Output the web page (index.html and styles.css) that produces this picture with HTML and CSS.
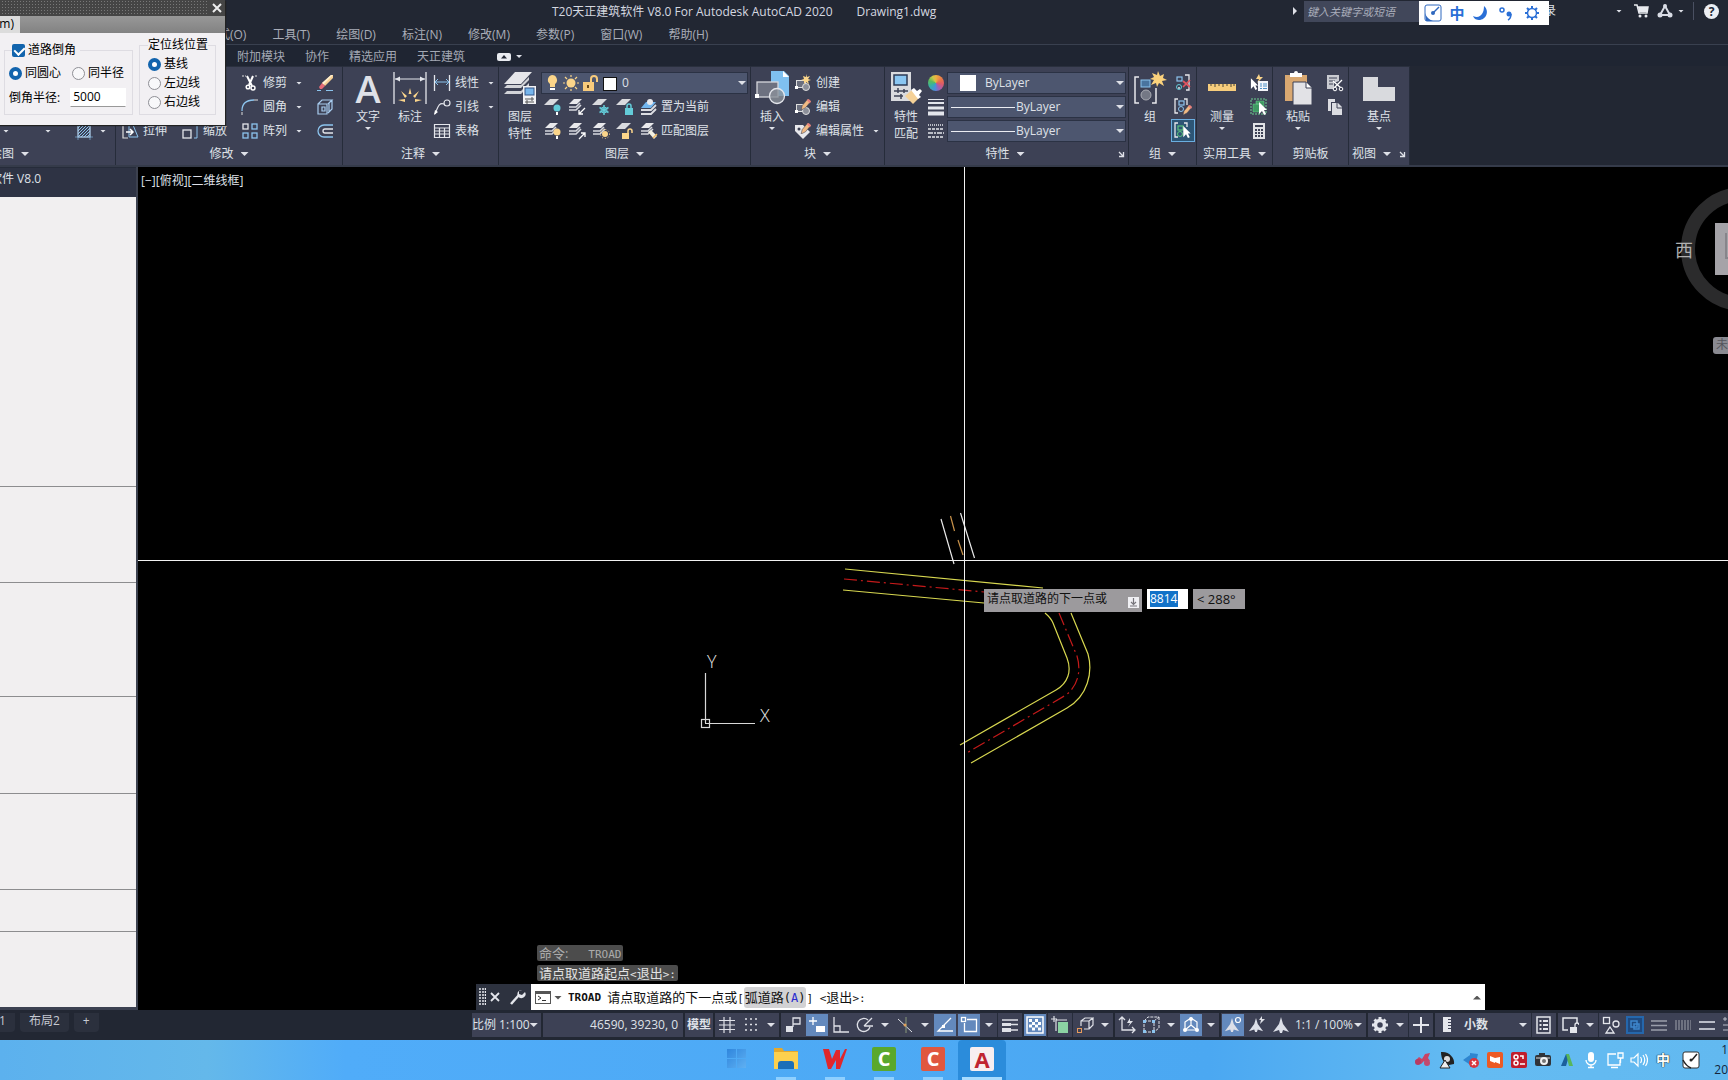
FILE: index.html
```html
<!DOCTYPE html>
<html lang="zh-CN">
<head>
<meta charset="utf-8">
<title>T20天正建筑软件 V8.0 For Autodesk AutoCAD 2020</title>
<link rel="stylesheet" href="styles.css">
</head>
<body>
<svg class="sprite" aria-hidden="true">
  <defs>
    <pattern id="hatch" width="3" height="3" patternUnits="userSpaceOnUse"><path d="M0 3L3 0" stroke="#8cc4ee" stroke-width="1"/></pattern>
    <linearGradient id="winlogo" x1="0" y1="0" x2="1" y2="1"><stop offset="0" stop-color="#2f86dd"/><stop offset="1" stop-color="#5fb0f2"/></linearGradient>
  </defs>
  <symbol id="scissors" viewBox="0 0 18 18"><path d="M1 2h4M14 2h3" stroke="#ddd" stroke-dasharray="2 1"/><path d="M6 2l5 10M12 2L8 11" stroke="#fff" stroke-width="2" fill="none"/><circle cx="7" cy="13" r="1.800" fill="none" stroke="#fff" stroke-width="1.500"/><circle cx="12" cy="14" r="2" fill="none" stroke="#fff" stroke-width="1.500"/></symbol>
  <symbol id="fillet" viewBox="0 0 18 18"><path d="M1 17v-3M13 2h4" stroke="#ddd"/><path d="M1 13C1 6 5 2 13 2" fill="none" stroke="#8cc4ee" stroke-width="1.300"/></symbol>
  <symbol id="array" viewBox="0 0 18 18"><g fill="none" stroke="#8cc4ee" stroke-width="1.300"><rect x="2" y="2" width="5" height="5" stroke="#e4e6ec"/><rect x="11" y="2" width="5" height="5"/><rect x="2" y="11" width="5" height="5"/><rect x="11" y="11" width="5" height="5"/></g></symbol>
  <symbol id="eraser" viewBox="0 0 18 18"><path d="M1 16.500h4M10 16.500h7" stroke="#8cc4ee"/><path d="M6 9l9-8h2v3L9 12z" fill="#f6cf93"/><path d="M15 1h2L7 11 6 9z" fill="#fff0d0"/><path d="M3 13l3-4 3 3-3 3-2 0z" fill="#e56a76"/></symbol>
  <symbol id="explode" viewBox="0 0 18 18"><path d="M2 6h9v10H2zM2 6l4-4h10l-4 4M16 2v9l-4 4M6 9h3v4H6zM13 5v9" fill="none" stroke="#a9cdf0" stroke-width="1.200"/></symbol>
  <symbol id="offset" viewBox="0 0 18 18"><path d="M17 3H8a6 6 0 0 0 0 12h9" fill="none" stroke="#8cc4ee" stroke-width="1.300"/><path d="M17 7H9a2 2 0 0 0 0 4h8" fill="none" stroke="#e4e6ec" stroke-width="1.300"/></symbol>
  <symbol id="stretch" viewBox="0 0 18 18"><path d="M7 3H2v13h5" fill="none" stroke="#ddd" stroke-width="1.200"/><path d="M8 3v12h9L12 3" fill="none" stroke="#8cc4ee"/><path d="M5 10h7m-3-3l3 3-3 3" fill="none" stroke="#fff" stroke-width="1.500"/></symbol>
  <symbol id="scale" viewBox="0 0 18 18"><path d="M2 3h14v13h-3" fill="none" stroke="#8cc4ee"/><rect x="2" y="8" width="8" height="8" fill="none" stroke="#e4e6ec" stroke-width="1.300"/></symbol>
  <symbol id="dimlin" viewBox="0 0 18 18"><path d="M1.500 1v16M16.500 1v16" stroke="#e4e6ec" stroke-width="1.300"/><path d="M2 8h14M5 5L2 8l3 3M13 5l3 3-3 3" fill="none" stroke="#8cc4ee"/></symbol>
  <symbol id="leader" viewBox="0 0 18 18"><circle cx="14" cy="5" r="3" fill="none" stroke="#e4e6ec" stroke-width="1.200"/><path d="M11 6C6 4 5 9 2 16" fill="none" stroke="#e4e6ec" stroke-width="1.200"/><path d="M1 17l1-5 3 2z" fill="#fff"/></symbol>
  <symbol id="table" viewBox="0 0 18 18"><path d="M1.500 2.500h15v13h-15zM1 6h16M1 9h16M1 12h16M6.500 6v10M11.500 6v10" fill="none" stroke="#e4e6ec" stroke-width="1.200"/></symbol>
  <symbol id="sheets" viewBox="0 0 18 18"><path d="M6 1h8l-5 5H1z" fill="#e9e9ec"/><path d="M1 9h7l4-4M1 12h7l5-5" fill="none" stroke="#d6d8de" stroke-width="1.600"/></symbol>
  <symbol id="sheet" viewBox="0 0 18 18"><path d="M6 2h9l-6 6H0z" fill="#d9dade"/></symbol>
  <symbol id="pencil" viewBox="0 0 10 10"><path d="M2 6l5-6 3 2-5 6-4 2z" fill="#f1ba83" stroke="#3d4155" stroke-width=".5"/><path d="M6 1l2-1 2 2-1 2z" fill="#e9807c"/></symbol>
  <symbol id="blk" viewBox="0 0 18 18"><rect x="2.500" y="6.500" width="9" height="7" fill="#6b6f7e" stroke="#ddd"/><circle cx="12" cy="13" r="3.500" fill="#8c8f99" stroke="#ddd"/><rect x="1" y="12" width="3" height="3" fill="#fff"/></symbol>
  <symbol id="cursor" viewBox="0 0 10 14"><path d="M1 0l8 8H6l2 4-2 1-2-4-3 3z" fill="#fff"/></symbol>
  <symbol id="launch" viewBox="0 0 8 8"><path d="M2 2l4 4M6.500 2v4.500H2" fill="none" stroke="#dfe1e8" stroke-width="1.300"/></symbol>
  <symbol id="annot" viewBox="0 0 18 18"><path d="M9 1l2 7 6 8-6-2-1 3h-2l-1-3-6 2 6-8z" fill="#dcdfe8"/></symbol>
</svg>

<header class="titlebar">
  <h1 class="title">T20天正建筑软件 V8.0 For Autodesk AutoCAD 2020<span class="doc">Drawing1.dwg</span></h1>
  <div class="title-tools">
    <i class="rt"></i>
    <input class="search" aria-label="搜索" placeholder="键入关键字或短语">
    <button class="login">登录</button>
    <i class="dn"></i>
    <svg class="i16" viewBox="0 0 16 16"><path d="M1 2h3l2 8h8l1-6H5" fill="none" stroke="#e9ebf0" stroke-width="1.500"/><path d="M5 4h10l-1 5H6z" fill="#e9ebf0"/><circle cx="7" cy="13" r="1.500" fill="#e9ebf0"/><circle cx="13" cy="13" r="1.500" fill="#e9ebf0"/></svg>
    <svg class="i16" viewBox="0 0 16 16"><path d="M8 3l5 9H3z" fill="none" stroke="#d9dce5" stroke-width="2"/><circle cx="8" cy="3" r="2" fill="#d9dce5"/><circle cx="3" cy="12" r="2.500" fill="#d9dce5"/><circle cx="13" cy="12" r="2.500" fill="#d9dce5"/></svg>
    <i class="dn"></i>
    <span class="vbar"></span>
    <span class="help">?</span>
  </div>
  <div class="ime">
    <svg class="i18" viewBox="0 0 18 18"><rect x="1" y="1" width="16" height="16" rx="2" fill="#fff" stroke="#2f68bf"/><path d="M15 3l-6 6" stroke="#2f68bf" stroke-width="1.500"/><circle cx="9" cy="9" r="2" fill="#2f68bf"/><path d="M1 9q2 6 8 8H2z" fill="#2f68bf"/></svg>
    <b>中</b>
    <svg class="i18" viewBox="0 0 18 18"><path d="M12 2c6 5 2 14-5 14-2 0-5-1-6-4 7 3 11-2 11-10z" fill="#2a6fd6"/></svg>
    <svg class="i18" viewBox="0 0 18 18"><circle cx="5" cy="6" r="2" fill="none" stroke="#2a6fd6" stroke-width="1.500"/><circle cx="12" cy="10" r="2.500" fill="#2a6fd6"/><path d="M14 10c0 3-1 5-3 6" fill="none" stroke="#2a6fd6" stroke-width="1.500"/></svg>
    <svg class="i18" viewBox="0 0 18 18"><circle cx="9" cy="9" r="4.500" fill="none" stroke="#2a6fd6" stroke-width="1.500"/><path d="M9 2v3M9 13v3M2 9h3M13 9h3M4 4l2 2M12 12l2 2M14 4l-2 2M6 12l-2 2" stroke="#2a6fd6" stroke-width="2"/></svg>
  </div>
</header>

<nav class="menubar">
  <a href="#">格式(O)</a><a href="#">工具(T)</a><a href="#">绘图(D)</a><a href="#">标注(N)</a><a href="#">修改(M)</a><a href="#">参数(P)</a><a href="#">窗口(W)</a><a href="#">帮助(H)</a>
</nav>

<nav class="tabs">
  <a href="#">附加模块</a><a href="#">协作</a><a href="#">精选应用</a><a href="#">天正建筑</a>
  <span class="toggle"><svg width="14" height="8" viewBox="0 0 14 8"><rect width="14" height="8" rx="2" fill="#e9ebf0"/><path d="M4 5.500L7 2l3 3.500z" fill="#222733"/></svg><i class="dn"></i></span>
</nav>

<section class="ribbon">
  <div class="panel p-draw">
    <div class="tools">
      <div class="row3"><i class="dn"></i><i class="dn"></i><svg class="i18" viewBox="0 0 18 18"><rect x="3" y="3" width="12" height="12" fill="url(#hatch)" stroke="#c9d3e4"/><path d="M0 15h18M3 0v18M15 0v18" stroke="#8cc4ee" stroke-width=".6"/></svg><i class="dn"></i></div>
    </div>
    <div class="ptitle">绘图<i class="dn big"></i></div>
  </div>

  <div class="panel p-modify">
    <div class="tools modify-grid">
      <button class="tb c3"><svg><use href="#scissors"/></svg>修剪<i class="dn"></i></button>
      <button class="tb c4" aria-label="删除"><svg><use href="#eraser"/></svg></button>
      <button class="tb c3"><svg><use href="#fillet"/></svg>圆角<i class="dn"></i></button>
      <button class="tb c4" aria-label="分解"><svg><use href="#explode"/></svg></button>
      <button class="tb c1"><svg><use href="#stretch"/></svg>拉伸</button>
      <button class="tb c2"><svg><use href="#scale"/></svg>缩放</button>
      <button class="tb c3"><svg><use href="#array"/></svg>阵列<i class="dn"></i></button>
      <button class="tb c4" aria-label="偏移"><svg><use href="#offset"/></svg></button>
    </div>
    <div class="ptitle">修改<i class="dn big"></i></div>
  </div>

  <div class="panel p-annot">
    <div class="tools">
      <button class="bigb w50"><span class="bigA">A</span><span>文字</span><i class="dn"></i></button>
      <button class="bigb w34"><svg viewBox="0 0 34 34"><path d="M1 1v32M33 1v32" stroke="#e4e6ec" stroke-width="1.300"/><path d="M2 8h30" stroke="#e4e6ec"/><path d="M2 8l5-2.500v5zM32 8l-5-2.500v5z" fill="#e4e6ec"/><path d="M17 17l1.500 6h-3zM8 20l6 5-2 2zM26 20l-6 5 2 2zM5 29l7-1v3zM29 29l-7-1v3z" fill="#fbd68c"/></svg><span>标注</span></button>
      <div class="stack">
        <button class="tb"><svg><use href="#dimlin"/></svg>线性<i class="dn"></i></button>
        <button class="tb"><svg><use href="#leader"/></svg>引线<i class="dn"></i></button>
        <button class="tb"><svg><use href="#table"/></svg>表格</button>
      </div>
    </div>
    <div class="ptitle">注释<i class="dn big"></i></div>
  </div>

  <div class="panel p-layer">
    <div class="tools">
      <button class="bigb w42"><svg viewBox="0 0 34 34"><path d="M12 1h17L18 13H1z" fill="#e6e6ea"/><path d="M1 17h17l8-8v-3l-8 8H4zM1 23h17l8-8v-3l-8 8H4z" fill="#d2d3d8"/><rect x="20" y="15" width="13" height="18" fill="#f2f2f5"/><rect x="22" y="17" width="9" height="7" fill="#76b5ec" stroke="#35568a"/><path d="M22 28h9M22 31h9M29 26v4M24 29v4" stroke="#555"/></svg><span>图层</span><span>特性</span></button>
      <div class="stack">
        <div class="combo layer">
          <svg width="90" height="18" viewBox="0 0 90 18"><path d="M7 1a5 5 0 0 1 3 9v3H5v-3a5 5 0 0 1 2-9z" fill="#fbd58a"/><path d="M5 14h5v2H5z" fill="#fff"/><circle cx="26" cy="9" r="4.500" fill="#fbd58a"/><path d="M26 1v2M26 15v2M18 9h2M32 9h2M20 3l2 2M30 13l2 2M32 3l-2 2M22 13l-2 2" stroke="#fbd58a" stroke-width="1.200"/><path d="M38 8h11v9H38z" fill="#f8cb7c"/><path d="M46 8V5a3 3 0 0 1 6 0v3" fill="none" stroke="#f8cb7c" stroke-width="2"/><path d="M43 11v3" stroke="#6b4a1a" stroke-width="2"/><rect x="58.500" y="3.500" width="13" height="13" fill="#fff" stroke="#111"/></svg>
          <select aria-label="图层"><option>0</option></select><i class="dn big"></i>
        </div>
        <div class="irow">
          <svg class="i18" viewBox="0 0 18 18"><use href="#sheet" width="18" height="18" y="-1"/><circle cx="13" cy="10" r="3.500" fill="#63cbd8"/><path d="M12 14h2v3h-2z" fill="#fff"/></svg>
          <svg class="i18" viewBox="0 0 18 18"><use href="#sheets" width="18" height="18"/><path d="M17 10l-6 6m0-4v4h4" fill="none" stroke="#fff" stroke-width="1.300"/></svg>
          <svg class="i18" viewBox="0 0 18 18"><use href="#sheet" width="18" height="18" y="-1"/><path d="M12 7v10M7.500 9.500l9 5M16.500 9.500l-9 5" stroke="#63cbd8" stroke-width="1.500"/><circle cx="12" cy="12" r="3" fill="none" stroke="#63cbd8"/></svg>
          <svg class="i18" viewBox="0 0 18 18"><use href="#sheet" width="18" height="18" y="-1"/><rect x="9" y="10" width="8" height="7" fill="#63cbd8"/><path d="M11 10V8a2 2 0 0 1 4 0v2" fill="none" stroke="#63cbd8" stroke-width="1.500"/></svg>
          <button class="tb tight"><svg viewBox="0 0 18 18"><path d="M6 4h10l-5 6H1z" fill="#72b6ef"/><circle cx="10" cy="4" r="3" fill="#e8e8ec"/><path d="M1 12h10l5-5M1 16h10l5-5" fill="none" stroke="#dcdde2" stroke-width="1.800"/></svg>置为当前</button>
        </div>
        <div class="irow">
          <svg class="i18" viewBox="0 0 18 18"><use href="#sheets" width="18" height="18"/><circle cx="13" cy="10" r="3.500" fill="#fbd58a"/><path d="M12 14h2v3h-2z" fill="#fff"/></svg>
          <svg class="i18" viewBox="0 0 18 18"><use href="#sheets" width="18" height="18"/><path d="M11 17l6-6m-4 0h4v4" fill="none" stroke="#fff" stroke-width="1.300"/></svg>
          <svg class="i18" viewBox="0 0 18 18"><use href="#sheets" width="18" height="18"/><circle cx="13" cy="12" r="3" fill="#fbd58a"/><circle cx="13" cy="12" r="4.500" fill="none" stroke="#fbd58a" stroke-dasharray="1 2"/></svg>
          <svg class="i18" viewBox="0 0 18 18"><use href="#sheet" width="18" height="18" y="-1"/><rect x="6" y="11" width="7" height="6" fill="#fbd58a"/><path d="M12 11V9a2 2 0 0 1 4 0v2" fill="none" stroke="#fbd58a" stroke-width="1.500"/></svg>
          <button class="tb tight"><svg viewBox="0 0 18 18"><use href="#sheets" width="18" height="18"/><path d="M8 10l3-2 6 6-3 3z" fill="#f3f0e2"/><path d="M13 16l4-4" stroke="#f0b95e" stroke-width="1.500"/></svg>匹配图层</button>
        </div>
      </div>
    </div>
    <div class="ptitle">图层<i class="dn big"></i></div>
  </div>

  <div class="panel p-block">
    <div class="tools">
      <button class="bigb w42"><svg viewBox="0 0 34 34"><path d="M16 0h13l5 5v20H16z" fill="#7fc0f0"/><path d="M28 0v6h6" fill="#fff"/><rect x="2" y="11" width="21" height="15" fill="#6d7180" stroke="#d6d7dc" stroke-width="1.300"/><circle cx="22" cy="25" r="7.500" fill="#8a9099" fill-opacity=".8" stroke="#e4e6ec" stroke-width="1.300"/><rect x="0" y="23" width="4" height="4" fill="#fff"/></svg><span>插入</span><i class="dn"></i></button>
      <div class="stack indent">
        <button class="tb"><svg viewBox="0 0 18 18"><use href="#blk" width="18" height="18"/><path d="M12 0l1 3 3-1-2 3 3 1-3 1 1 3-3-2-2 2v-3l-3-1 3-1-1-3 3 1z" fill="#fbd58a"/></svg>创建</button>
        <button class="tb"><svg viewBox="0 0 18 18"><use href="#blk" width="18" height="18"/><use href="#pencil" x="6" y="1" width="11" height="11"/></svg>编辑</button>
        <button class="tb"><svg viewBox="0 0 18 18"><path d="M1 3h8l7 7-7 7-8-8z" fill="#e8e8ec"/><circle cx="5" cy="7" r="1.500" fill="#3d4155"/><use href="#pencil" x="6" y="1" width="11" height="11"/></svg>编辑属性<i class="dn"></i></button>
      </div>
    </div>
    <div class="ptitle">块<i class="dn big"></i></div>
  </div>

  <div class="panel p-props">
    <div class="tools">
      <button class="bigb w42"><svg viewBox="0 0 34 34"><rect x="2" y="1" width="20" height="29" fill="#d9dade"/><rect x="5" y="4" width="13" height="10" fill="#8ac6f2" stroke="#2c3a55" stroke-width="1.500"/><path d="M5 20h14M5 25h9M9 17v5M15 18v4M12 23v5" stroke="#3d4155" stroke-width="1.500"/><path d="M16 25l7-6 7 8-6 6z" fill="#f5d197"/><path d="M22 19l3-2 3 3 3-2 2 2-3 4 2 2-3 2z" fill="#fff"/></svg><span>特性</span><span>匹配</span></button>
      <div class="props">
        <span class="wheel"></span>
        <div class="combo"><span class="swatch"></span><select aria-label="颜色"><option>ByLayer</option></select><i class="dn big"></i></div>
        <svg class="i18" viewBox="0 0 18 18"><path d="M1 1.500h16" stroke="#e4e6ec"/><path d="M1 5h16" stroke="#e4e6ec" stroke-width="2"/><path d="M1 10h16" stroke="#e4e6ec" stroke-width="3"/><path d="M1 15.500h16" stroke="#e4e6ec" stroke-width="4"/></svg>
        <div class="combo"><span class="line"></span><select aria-label="线宽"><option>ByLayer</option></select><i class="dn big"></i></div>
        <svg class="i18" viewBox="0 0 18 18"><g stroke="#e4e6ec" stroke-width="1.300"><path d="M1 3h16" stroke-dasharray="1 1"/><path d="M1 7h16" stroke-dasharray="3 1"/><path d="M1 11h16" stroke-dasharray="5 1 2 1"/><path d="M1 15h16" stroke-dasharray="3 1"/></g></svg>
        <div class="combo"><span class="line"></span><select aria-label="线型"><option>ByLayer</option></select><i class="dn big"></i></div>
      </div>
    </div>
    <div class="ptitle"><span class="grow"></span>特性<i class="dn big"></i><span class="grow end"><svg width="8" height="8"><use href="#launch"/></svg></span></div>
  </div>

  <div class="panel p-group">
    <div class="tools">
      <button class="bigb w42"><svg viewBox="0 0 34 34"><path d="M6 6H2v26h4M19 32h4V17" fill="none" stroke="#e8e8ec" stroke-width="1.500"/><rect x="8" y="9" width="9" height="7" fill="#49749f" stroke="#8cc4ee"/><circle cx="13" cy="24" r="5" fill="#747885" stroke="#a9abb3"/><path d="M25 0l2 5 4-2-1 4 4 2-5 1 2 5-5-3-2 4-1-4-5 2 3-5-4-1 4-2-2-4 5 2z" fill="#fbd27c"/></svg><span>组</span></button>
      <div class="stack">
        <button class="ib" aria-label="解除编组"><svg viewBox="0 0 18 18"><path d="M11 1h4v15h-3M4 14h2" fill="none" stroke="#e8e8ec" stroke-width="1.300"/><rect x="3" y="3" width="5" height="4" fill="none" stroke="#8cc4ee" stroke-width="1.200"/><circle cx="5" cy="13" r="2.500" fill="none" stroke="#63cbd8"/><path d="M9 7l7 6M16 6l-7 7" stroke="#e05560" stroke-width="1.700"/></svg></button>
        <button class="ib" aria-label="组编辑"><svg viewBox="0 0 18 18"><path d="M4 1H1v14h3M10 1h3v6" fill="none" stroke="#e8e8ec" stroke-width="1.300"/><rect x="5" y="3" width="5" height="4" fill="none" stroke="#8cc4ee" stroke-width="1.200"/><circle cx="7" cy="11" r="2.500" fill="none" stroke="#8cc4ee"/><use href="#pencil" x="8" y="7" width="10" height="10"/></svg></button>
        <button class="ib on" aria-label="启用组选择"><svg viewBox="0 0 18 18"><path d="M4 1H1v14h3M10 1h3v4" fill="none" stroke="#e8e8ec" stroke-width="1.300"/><rect x="4" y="4" width="5" height="4" fill="none" stroke="#5bc27c" stroke-width="1.200"/><circle cx="6" cy="12" r="2.500" fill="none" stroke="#5bc27c"/><use href="#cursor" x="8" y="4" width="10" height="13"/></svg></button>
      </div>
    </div>
    <div class="ptitle">组<i class="dn big"></i></div>
  </div>

  <div class="panel p-util">
    <div class="tools">
      <button class="bigb w50"><svg viewBox="0 0 34 34"><path d="M3 13h28v7H3z" fill="#f7cd7c"/><path d="M6 13v2M10 13v3M14 13v2M18 13v3M22 13v2M26 13v3M29 13v2" stroke="#4c4637"/></svg><span>测量</span><i class="dn"></i></button>
      <div class="stack">
        <button class="ib" aria-label="快速选择"><svg viewBox="0 0 18 18"><path d="M9 0L6 5h3l-2 4 6-6h-3z" fill="#fbd58a"/><use href="#cursor" y="4" width="9" height="13"/><rect x="8" y="7" width="10" height="10" fill="#f3f5f9"/><path d="M10 10h2M13 10h4M10 12h2M13 12h4M10 14.500h2M13 14.500h4" stroke="#4d8fc7"/></svg></button>
        <button class="ib" aria-label="全部选择"><svg viewBox="0 0 18 18"><rect x="1" y="1" width="15" height="15" fill="none" stroke="#6fd192" stroke-dasharray="2 1"/><path d="M3 6h7v8H3zM6 3h8v8h-4V6H6z" fill="#3f9a63" stroke="#6fd192" stroke-width=".5"/><use href="#cursor" x="8" y="4" width="10" height="14"/></svg></button>
        <button class="ib" aria-label="快速计算器"><svg viewBox="0 0 18 18"><rect x="3" y="1" width="12" height="16" fill="#e1e2e6"/><path d="M5 4h8" stroke="#3d4155" stroke-width="2"/><path d="M5 8h8M5 11h8M5 14h8" stroke="#3d4155" stroke-width="1.800" stroke-dasharray="2 1"/></svg></button>
      </div>
    </div>
    <div class="ptitle">实用工具<i class="dn big"></i></div>
  </div>

  <div class="panel p-clip">
    <div class="tools">
      <button class="bigb w50"><svg viewBox="0 0 34 34"><path d="M4 4h22v26H4z" fill="#d9a871"/><path d="M9 2h4a2 2 0 0 1 4 0h4v4H9z" fill="#fff"/><path d="M12 11h13l6 6v17H12z" fill="#e2e2e6" stroke="#3d4155"/><path d="M25 11v6h6" fill="#fff" stroke="#3d4155"/></svg><span>粘贴</span><i class="dn"></i></button>
      <div class="stack">
        <button class="ib" aria-label="剪切"><svg viewBox="0 0 18 18"><path d="M1 1h12v6l-5 2v6H1z" fill="#c9cbd1"/><path d="M3 4h8M3 7h6M3 10h4" stroke="#3d4155"/><path d="M7 7l8 7M16 6l-8 8" stroke="#fff" stroke-width="1.300"/><circle cx="9" cy="15" r="1.800" fill="#3d4155" stroke="#fff"/><circle cx="15" cy="15" r="1.800" fill="#3d4155" stroke="#fff"/></svg></button>
        <button class="ib" aria-label="复制"><svg viewBox="0 0 18 18"><path d="M2 1h7v3H5v9H2z" fill="#dcdde2"/><path d="M6 5h6l4 4v8H6z" fill="#dcdde2"/><path d="M11 5v5h5" fill="none" stroke="#3d4155"/></svg></button>
      </div>
    </div>
    <div class="ptitle">剪贴板</div>
  </div>

  <div class="panel p-view">
    <div class="tools">
      <button class="bigb w60"><svg viewBox="0 0 34 34"><path d="M1 6h15v10h17v14H1z" fill="#d9dade"/></svg><span>基点</span><i class="dn"></i></button>
    </div>
    <div class="ptitle">视图<i class="dn big"></i><svg width="8" height="8"><use href="#launch"/></svg></div>
  </div>
</section>

<main class="work">
  <aside class="side">
    <div class="side-head"><span>软件 V8.0</span></div>
    <div class="side-body">
      <div class="s1"></div><div class="s2"></div><div class="s3"></div><div class="s2"></div><div class="s2"></div><div class="s4"></div><div class="s5"></div>
    </div>
  </aside>
  <section class="canvas">
    <svg class="drawing" width="100%" height="100%">
      <g transform="translate(-138 -167)" fill="none" stroke-width="1.200">
        <g stroke="#e8e8e8"><path d="M941 519l13 45M960.500 513l14 45"/></g>
        <path d="M950.500 516l4 15M958 540l5 15" stroke="#c9924a"/>
        <g stroke="#d8d850"><path d="M845 569L1043 588M843 590L984 603"/>
          <path d="M1045 613Q1051 618 1053 623L1067 658C1072 671 1068 683 1056 690L960 745"/>
          <path d="M1071 613L1088 654C1093 672 1088 696 1067 708L971 763"/></g>
        <g stroke="#c41a1a" stroke-dasharray="13 4 2 4"><path d="M844 579L984 592"/><path d="M1059 613L1077 656C1081 669 1079 685 1066 695L965 754"/></g>
        <g stroke="#d8d8d8"><rect x="701.500" y="719.500" width="8" height="8"/><path d="M705.500 723V673M705 723.500h50"/></g>
      </g>
      <g class="axis"><text x="569" y="501">Y</text><text x="622" y="555">X</text></g>
      <g class="cross"><path d="M826.500 0V818"/><line x1="0" y1="393.500" x2="100%" y2="393.500"/></g>
    </svg>
    <div class="vplabel">[−][俯视][二维线框]</div>
    <div class="cube">
      <svg width="60" height="170" viewBox="0 0 60 170"><circle cx="75" cy="62" r="55" fill="none" stroke="#2b2b2c" stroke-width="14"/><rect x="47" y="36" width="20" height="52" fill="#a5a3a8"/><path d="M58 46v26M57 71h6" stroke="#87858b" stroke-width="2"/><rect x="45" y="150" width="30" height="17" rx="3" fill="#8a8a91"/></svg>
      <span class="west">西</span><span class="wcs">未</span>
    </div>
    <div class="dyn">
      <label for="dist">请点取道路的下一点或<svg width="11" height="11" viewBox="0 0 11 11"><rect width="11" height="11" fill="#f0f0f4"/><path d="M5.500 1v6M3 5l2.500 2.500L8 5M2 9h7" fill="none" stroke="#77757c" stroke-width="1.200"/></svg></label>
      <span class="dist"><input id="dist" value="8814"></span>
      <span class="ang">&lt; 288°</span>
    </div>
    <div class="cmd">
      <div class="hist dim">命令:<span class="mono">&nbsp;  TROAD</span></div>
      <div class="hist">请点取道路起点<span class="mono">&lt;</span>退出<span class="mono">&gt;:</span></div>
      <div class="cmdline">
        <div class="grip">
          <svg width="7" height="18" viewBox="0 0 7 18"><path d="M1 0v18M4 0v18M6.500 0v18" stroke="#e4e6ec" stroke-width="1.500" stroke-dasharray="2 1"/></svg>
          <svg width="10" height="10" viewBox="0 0 10 10"><path d="M1 1l8 8M9 1l-8 8" stroke="#e4e6ec" stroke-width="1.800"/></svg>
          <svg class="wrench" width="16" height="16" viewBox="0 0 16 16"><path d="M1 15l8-9" stroke="#e4e6ec" stroke-width="2.500"/><path d="M15 3l-3 3-3-1-0-3 3-1a4 4 0 0 0-4 6 4 4 0 0 0 7-4z" fill="#e4e6ec"/></svg>
        </div>
        <div class="prompt">
          <svg width="16" height="13" viewBox="0 0 16 13"><rect x=".5" y=".5" width="15" height="12" fill="#fff" stroke="#555"/><path d="M0 2h16" stroke="#555" stroke-width="2"/><path d="M3 5l3 2-3 2M7 9.500h4" fill="none" stroke="#333"/></svg>
          <i class="dn big dark"></i>
          <b class="mono">TROAD</b>
          <span class="ptext">请点取道路的下一点或<span class="mono">[</span><a href="#" class="opt">弧道路<span class="mono">(<em>A</em>)</span></a><span class="mono">] &lt;</span>退出<span class="mono">&gt;:</span></span>
          <i class="up"></i>
        </div>
      </div>
    </div>
  </section>
</main>

<footer class="status">
  <div class="layouts"><a href="#">布局1</a><a href="#">布局2</a><a href="#">+</a></div>
  <div class="cell scale">比例 1:100<i class="dn big"></i></div>
  <div class="cell coords">46590, 39230, 0</div>
  <div class="cell model">模型</div>
  <div class="cell">
    <span class="s"><svg viewBox="0 0 18 18"><path d="M6 1v16M12 1v16M1 4.500h16M1 9h16M1 13.500h16" stroke="#dfe1e8" stroke-width="1.200"/></svg></span>
    <span class="s"><svg viewBox="0 0 18 18"><path d="M3 3h14M3 8.500h14M3 14h14" stroke="#dfe1e8" stroke-width="1.600" stroke-dasharray="2 3"/></svg></span>
    <span class="a"><i class="dn big"></i></span>
  </div>
  <div class="cell">
    <span class="s"><svg viewBox="0 0 18 18"><path d="M2 10h7v6H2z" fill="#dfe1e8"/><path d="M9 11V2h7v6H9" fill="none" stroke="#dfe1e8" stroke-width="1.300"/></svg></span>
    <span class="s on"><svg viewBox="0 0 18 18"><path d="M5 1v8M1 5h8" stroke="#fff" stroke-width="1.300"/><path d="M8 10h9v6H8z" fill="#fff"/></svg></span>
    <span class="s"><svg viewBox="0 0 18 18"><path d="M2 1v15h15M2 10h6v6" fill="none" stroke="#dfe1e8" stroke-width="1.300"/></svg></span>
    <span class="s"><svg viewBox="0 0 18 18"><path d="M12 4a6.500 6.500 0 1 0 2 7M8 10h9M8 10l8-8" fill="none" stroke="#dfe1e8" stroke-width="1.300"/></svg></span>
    <span class="a"><i class="dn big"></i></span>
    <span class="s"><svg viewBox="0 0 18 18"><path d="M2 3l14 13" stroke="#dfe1e8"/><path d="M10 1v16" stroke="#8b9a7c"/><circle cx="9" cy="9" r="1.500" fill="#e0a05a"/></svg></span>
    <span class="a"><i class="dn big"></i></span>
    <span class="s on"><svg viewBox="0 0 18 18"><path d="M15 2L2 15h15" fill="none" stroke="#fff" stroke-width="1.300"/><rect x="6" y="9" width="3" height="3" fill="#fff"/></svg></span>
    <span class="s on"><svg viewBox="0 0 18 18"><path d="M7 3.500h9.500v12h-12V7" fill="none" stroke="#fff" stroke-width="1.300"/><rect x="1.500" y="1.500" width="4" height="4" fill="none" stroke="#fff" stroke-width="1.300"/></svg></span>
    <span class="a"><i class="dn big"></i></span>
    <span class="s sep"><svg viewBox="0 0 18 18"><path d="M1 4h16" stroke="#dfe1e8" stroke-width="1.500"/><path d="M1 8.500h9" stroke="#dfe1e8" stroke-width="3"/><path d="M10 8.500h7M10 14h7" stroke="#dfe1e8" stroke-width="1.500"/><path d="M1 14h9" stroke="#dfe1e8" stroke-width="4"/></svg></span>
    <span class="s on sep"><svg viewBox="0 0 18 18"><rect x="1" y="1" width="16" height="16" fill="none" stroke="#fff" stroke-width="1.500"/><path d="M3 4.500h12M3 10h12" stroke="#fff" stroke-width="3" stroke-dasharray="3 3"/><path d="M6 7.500h9M6 13h9" stroke="#fff" stroke-width="3" stroke-dasharray="3 3"/></svg></span>
    <span class="s sep"><svg viewBox="0 0 18 18"><path d="M3 0v6M0 3h6M5 4h11M5 4v11" stroke="#dfe1e8" stroke-width="1.200"/><rect x="7" y="6" width="10" height="11" fill="#8bd3a3"/></svg></span>
    <span class="s sep"><svg viewBox="0 0 18 18"><path d="M5 10V5h8v8H8M5 5l4-3h8l-4 3M17 2v7l-4 4" fill="none" stroke="#dfe1e8" stroke-width="1.200"/><rect x="1.500" y="12.500" width="4" height="4" fill="none" stroke="#e79a5c"/></svg></span>
    <span class="a"><i class="dn big"></i></span>
  </div>
  <div class="cell">
    <span class="s"><svg viewBox="0 0 18 18"><path d="M4 1v13h13M1 4l3-3 3 3M14 11l3 3-3 3" fill="none" stroke="#dfe1e8" stroke-width="1.300"/><path d="M12 2l-3 5h3l-2 4 5-6h-3z" fill="#dfe1e8"/></svg></span>
    <span class="s"><svg viewBox="0 0 18 18"><path d="M2 5h10v11H2zM2 5l4-4h11l-5 4M17 1v11l-5 4" fill="none" stroke="#dfe1e8" stroke-dasharray="3 1"/><path d="M1 4h3v3H1zM10 4h3v3h-3zM1 14h3v3H1zM10 14h3v3h-3z" fill="#8cc4ee"/></svg></span>
    <span class="a"><i class="dn big"></i></span>
    <span class="s on"><svg viewBox="0 0 18 18"><path d="M9 2l6 4v8H3V6zM9 2v7M9 9l6 5M9 9l-6 5" fill="none" stroke="#fff" stroke-width="1.200"/><circle cx="9" cy="3" r="2" fill="#fff"/><circle cx="3" cy="14" r="2" fill="#fff"/><circle cx="15" cy="14" r="2" fill="#fff"/></svg></span>
    <span class="a"><i class="dn big"></i></span>
  </div>
  <div class="cell">
    <span class="s on"><svg viewBox="0 0 18 18"><use href="#annot" width="16" height="18"/><circle cx="14" cy="4" r="2.500" fill="none" stroke="#fff" stroke-width="1.200"/></svg></span>
    <span class="s"><svg viewBox="0 0 18 18"><use href="#annot" width="16" height="18"/><path d="M14 0l-3 4h2l-1 4 5-5h-3z" fill="#dfe1e8"/></svg></span>
    <span class="s"><svg><use href="#annot"/></svg></span>
    <span class="pct">1:1 / 100%</span>
    <span class="a"><i class="dn big"></i></span>
  </div>
  <div class="cell">
    <span class="s"><svg viewBox="0 0 18 18"><circle cx="9" cy="9" r="4.500" fill="none" stroke="#e4e6ec" stroke-width="3.500"/><path d="M9 1v3M9 14v3M1 9h3M14 9h3M3.500 3.500l2 2M12.500 12.500l2 2M14.500 3.500l-2 2M5.500 12.500l-2 2" stroke="#e4e6ec" stroke-width="3"/></svg></span>
    <span class="a"><i class="dn big"></i></span>
    <span class="s sep"><svg viewBox="0 0 18 18"><path d="M9 1v16M1 9h16" stroke="#e4e6ec" stroke-width="2"/></svg></span>
  </div>
  <div class="cell">
    <span class="s"><svg viewBox="0 0 18 18"><path d="M5 1h8v2h-3v1h3v2h-3v1h3v2h-3v1h3v2h-3v1h3v3H5z" fill="#e4e6ec"/></svg></span>
    <span class="units">小数</span>
    <span class="a"><i class="dn big"></i></span>
    <span class="s sep"><svg viewBox="0 0 18 18"><rect x="2" y="1" width="13" height="16" fill="none" stroke="#e4e6ec" stroke-width="1.500"/><path d="M4.500 5h2M4.500 9h2M4.500 13h2M8 5h5M8 9h5M8 13h5" stroke="#e4e6ec" stroke-width="1.800"/></svg></span>
  </div>
  <div class="cell">
    <span class="s"><svg viewBox="0 0 18 18"><path d="M7 14H2V2h14v5" fill="none" stroke="#e4e6ec" stroke-width="1.500"/><rect x="9" y="11" width="7" height="6" fill="#e4e6ec"/><path d="M14 11V9a2 2 0 0 1 4 0" fill="none" stroke="#e4e6ec" stroke-width="1.300"/></svg></span>
    <span class="a"><i class="dn big"></i></span>
    <span class="s sep"><svg viewBox="0 0 18 18"><rect x="1.500" y="1.500" width="6" height="6" fill="none" stroke="#e4e6ec" stroke-width="1.300"/><circle cx="14" cy="8" r="3" fill="none" stroke="#e4e6ec" stroke-width="1.300"/><path d="M8 11l4 6H4z" fill="none" stroke="#e4e6ec" stroke-width="1.300"/></svg></span>
    <span class="s"><svg viewBox="0 0 18 18"><rect x="1" y="1" width="16" height="16" fill="#1f4a80" stroke="#2567ac" stroke-width="2"/><path d="M5 5h6v6H5zM8 8h5v5H8z" fill="none" stroke="#3f86cc" stroke-width="1.500"/></svg></span>
    <span class="s"><svg viewBox="0 0 18 18"><path d="M1 5h16M1 9.500h16M1 14h16" stroke="#9a9eab" stroke-width="1.300"/></svg></span>
    <span class="s"><svg viewBox="0 0 18 18"><path d="M1 5h16M1 7h16M1 9h16M1 11h16M1 13h16" stroke="#a0a3ad" stroke-dasharray="2 1"/></svg></span>
    <span class="s"><svg viewBox="0 0 18 18"><path d="M1 6h16M1 13h16" stroke="#b9bcc7" stroke-width="2"/></svg></span>
    <span class="s"><svg viewBox="0 0 18 18"><path d="M1 3h4M3 1v4M1 9h8M1 14h8" stroke="#b9bcc7"/></svg></span>
  </div>
</footer>

<div class="taskbar">
  <div class="apps">
    <span class="app"><svg viewBox="0 0 24 24"><path d="M2 2h9v9H2zM12 2h9v9h-9zM2 12h9v9H2zM12 12h9v9h-9z" fill="url(#winlogo)"/></svg></span>
    <span class="app run"><svg viewBox="0 0 24 24"><path d="M0 1h8l2 3h14v18H0z" fill="#e5a92c"/><path d="M0 5h24v17H0z" fill="#fdd04e"/><path d="M4 22v-5a3 3 0 0 1 3-3h10a3 3 0 0 1 3 3v5z" fill="#1d6fb8"/></svg></span>
    <span class="app run"><svg viewBox="0 0 24 24"><path d="M0 2h6l3 10 4-9h4v9l5-10h2L17 22h-4v-9l-5 9H5z" fill="#e0262b"/></svg></span>
    <span class="app run"><b class="c green">C</b></span>
    <span class="app run"><b class="c red">C</b></span>
    <span class="app run cur"><b class="acad">A</b></span>
  </div>
  <div class="tray">
    <svg viewBox="0 0 18 18"><path d="M1 10l4-4 3 2 3-5 5-1-2 5 2 3-4 2-2-2-3 3-3-1z" fill="#c84466"/><circle cx="4" cy="11" r="3" fill="#b83a62"/><circle cx="13" cy="12" r="3" fill="#c04a70"/></svg>
    <svg viewBox="0 0 18 18"><path d="M3 1c8-1 14 6 13 12l-5 1C6 13 3 8 3 1z" fill="#222"/><circle cx="9" cy="8" r="3" fill="#ddd"/><path d="M2 17l5-8 5 8z" fill="#eee" stroke="#222"/></svg>
    <svg viewBox="0 0 18 18"><path d="M1 9l7-5 2 2v9zM8 2l8 1-3 13H8z" fill="#2f86d0"/><circle cx="12" cy="12" r="5" fill="#d8353f"/><path d="M10 10l4 4M14 10l-4 4" stroke="#fff" stroke-width="1.500"/></svg>
    <svg viewBox="0 0 18 18"><rect x="1" y="1" width="16" height="16" rx="2" fill="#ec5a24"/><path d="M4 5l5 2v5l-5-2zM9 7l5-1v7l-5-2z" fill="#fff"/></svg>
    <svg viewBox="0 0 18 18"><rect x="1" y="1" width="16" height="16" rx="2" fill="#c01e2c"/><circle cx="6" cy="6" r="2" fill="none" stroke="#fff" stroke-width="1.500"/><circle cx="6" cy="12" r="2" fill="none" stroke="#fff" stroke-width="1.500"/><path d="M10 5h3v3M10 13h5" fill="none" stroke="#fff" stroke-width="1.500"/></svg>
    <svg viewBox="0 0 18 18"><rect x="1" y="4" width="16" height="11" rx="2" fill="#30343a"/><path d="M5 2h6v2H5z" fill="#30343a"/><path d="M2 7h14" stroke="#ddd"/><circle cx="10" cy="10" r="4" fill="#f3f3f3"/><circle cx="10" cy="10" r="2" fill="#777"/></svg>
    <svg viewBox="0 0 18 18"><path d="M3 15L8 3l3 2-3 10z" fill="#1b5f9d"/><path d="M8 3h3l4 12h-4z" fill="#58b65b"/></svg>
    <svg viewBox="0 0 18 18"><rect x="6" y="1" width="6" height="10" rx="3" fill="#fff"/><path d="M4 9a5 5 0 0 0 10 0M9 14v3M6 16.500h6" fill="none" stroke="#fff" stroke-width="1.300"/></svg>
    <svg viewBox="0 0 18 18"><path d="M10 3H2v11h12V9M5 16.500h7M12 2h5v5h-5zM14.500 7v5" fill="none" stroke="#fff" stroke-width="1.300"/></svg>
    <svg viewBox="0 0 18 18"><path d="M1 7h3l4-4v12l-4-4H1zM10.500 6q2 3 0 6M13 4q3.500 5 0 10M15.500 3q4 6 0 12" fill="none" stroke="#fff" stroke-width="1.200"/></svg>
    <b>中</b>
    <svg viewBox="0 0 18 18"><rect x="1" y="1" width="16" height="16" rx="2" fill="#fff" stroke="#333"/><path d="M15 3l-5 6M1 9q3 6 8 8" fill="none" stroke="#222" stroke-width="1.500"/><circle cx="9" cy="9" r="1.500" fill="#222"/></svg>
    <div class="clock"><span>1</span><span>20</span></div>
  </div>
</div>

<form class="dialog">
  <div class="dlg-title"><button type="button" aria-label="关闭"><svg width="10" height="10" viewBox="0 0 10 10"><path d="M1 1l8 8M9 1l-8 8" stroke="#eee" stroke-width="2"/></svg></button></div>
  <div class="dlg-tabs"><span>mm)</span></div>
  <div class="dlg-body">
    <div class="grp g1">
      <label class="cap"><input type="checkbox" checked>道路倒角</label>
      <div class="pair"><label><input type="radio" name="arc" checked>同圆心</label><label><input type="radio" name="arc">同半径</label></div>
      <div class="pair2"><label for="rad">倒角半径:</label><input id="rad" type="text" value="5000"></div>
    </div>
    <div class="grp g2">
      <span class="cap">定位线位置</span>
      <label><input type="radio" name="pos" checked>基线</label>
      <label><input type="radio" name="pos">左边线</label>
      <label><input type="radio" name="pos">右边线</label>
    </div>
  </div>
</form>
</body>
</html>
```
FILE: styles.css
```css
* { box-sizing: border-box; }
html, body { height: 100%; }
body {
  margin: 0;
  display: flex;
  flex-direction: column;
  overflow: hidden;
  position: relative;
  background: #222733;
  color: #dfe1e8;
  font: 12px/16px "Open Sans", "Noto Sans CJK SC", sans-serif;
}
a { color: inherit; text-decoration: none; }
button, select, input { font: inherit; color: inherit; }
button { background: none; border: 0; padding: 0; margin: 0; }
svg { flex: none; display: block; }
.sprite { position: absolute; width: 0; height: 0; }
.i16 { width: 16px; height: 16px; }
.i18 { width: 18px; height: 18px; }

.dn { flex: none; width: 6px; height: 3px; background: #dfe1e8; clip-path: polygon(0 0, 100% 0, 50% 100%); }
.dn.big { width: 8px; height: 4px; }
.dn.dark { background: #555; }
.up { flex: none; width: 8px; height: 4px; background: #555; clip-path: polygon(50% 0, 100% 100%, 0 100%); }
.rt { flex: none; width: 4px; height: 8px; background: #dfe1e8; clip-path: polygon(0 0, 100% 50%, 0 100%); }

/* title bar */
.titlebar { position: relative; flex: none; height: 24px; display: flex; align-items: flex-start; background: #222733; }
.title { margin: 0; padding: 4px 0 0 552px; font-size: 12px; line-height: 16px; font-weight: 400; white-space: nowrap; color: #d5d8e0; }
.doc { margin-left: 24px; }
.title-tools { margin-left: auto; display: flex; align-items: center; height: 22px; padding-right: 9px; }
.search { width: 200px; height: 21px; margin: 0 0 0 7px; padding: 0 3px; border: 0; background: #41475a; font-size: 11px; font-style: italic; }
.search::placeholder { color: #a9adbb; }
.login { margin-left: 28px; margin-right: 60px; }
.title-tools .i16 { margin-left: 11px; }
.title-tools .i16 + .i16 { margin-left: 8px; }
.title-tools .i16 + .dn { margin-left: 5px; }
.vbar { width: 1px; height: 18px; margin: 0 10px 0 9px; background: #4a5062; }
.help { width: 15px; height: 15px; border-radius: 50%; background: #eceef3; color: #222733; font-weight: 700; line-height: 15px; text-align: center; }
.ime { position: absolute; top: 1px; right: 179px; width: 130px; height: 24px; padding: 0 8px 0 5px; display: flex; align-items: center; justify-content: space-between; background: #fff; z-index: 2; }
.ime b { color: #2a6fd6; font-size: 15px; }

/* menu and ribbon tabs */
.menubar { flex: none; height: 21px; padding: 2px 0 0 206px; display: flex; align-items: center; gap: 26px; border-bottom: 1px solid #39404f; color: #a9adb8; }
.tabs { flex: none; height: 21px; padding: 2px 0 0 237px; display: flex; align-items: center; gap: 20px; background: #1f2532; color: #a3a8b4; }
.toggle { display: flex; align-items: center; gap: 5px; margin-left: 12px; }

/* ribbon */
.ribbon { flex: none; display: flex; height: 101px; margin-left: -96px; background: #222733; border-bottom: 2px solid #353b4a; }
.panel { flex: none; display: flex; flex-direction: column; background: #3d4155; border-right: 1px solid #262c3a; border-top: 1px solid #2a303e; }
.tools { flex: 1; display: flex; padding-top: 4px; }
.ptitle { height: 22px; display: flex; align-items: center; justify-content: center; gap: 7px; }
.grow { flex: 1; }
.grow.end { display: flex; justify-content: flex-end; padding-right: 3px; }
.p-draw { width: 212px; }
.p-modify { width: 227px; }
.p-annot { width: 156px; }
.p-layer { width: 252px; }
.p-block { width: 134px; }
.p-props { width: 244px; }
.p-group { width: 68px; }
.p-util, .p-clip { width: 76px; }
.p-view { width: 61px; }

.tb { display: flex; align-items: center; height: 24px; gap: 4px; white-space: nowrap; }
.tb svg { width: 18px; height: 18px; }
.tb .dn { margin-left: 5px; }
.tb.tight { gap: 3px; }
.row3 { margin-top: 48px; height: 24px; flex: 1; display: flex; align-items: center; justify-content: flex-end; padding-right: 9px; }
.row3 .dn { margin-right: 36px; }
.row3 .dn + .dn { margin-right: 24px; }
.row3 .i18 + .dn { margin: 0 0 0 7px; }
.modify-grid { display: grid; grid-template-columns: 60px 60px 75px 24px; grid-template-rows: repeat(3, 24px); padding-left: 5px; }
.c1 { grid-column: 1; }
.c2 { grid-column: 2; }
.c3 { grid-column: 3; }
.c4 { grid-column: 4; }
.stack { display: flex; flex-direction: column; }
.stack.indent { padding-left: 1px; }
.bigb { display: flex; flex-direction: column; align-items: center; line-height: 17px; }
.bigb svg, .bigA { width: 34px; height: 34px; margin: 0 0 3px; }
.bigb .dn { margin-top: 2px; }
.bigA { font: 600 38px/34px "Open Sans", sans-serif; text-align: center; }
.w34 { width: 34px; margin-right: 6px; }
.w42 { width: 42px; }
.w50 { width: 50px; }
.w60 { width: 60px; }

.combo { display: flex; align-items: center; height: 22px; background: #4d566f; border: 1px solid #2b3244; padding-right: 1px; }
.combo select { flex: 1; min-width: 0; height: 20px; padding: 0; border: 0; background: none; appearance: none; line-height: 18px; }
.combo.layer { width: 207px; margin: 1px 0; }
.combo.layer svg { margin: 0 -13px 0 3px; }
.irow { display: flex; align-items: center; height: 24px; gap: 6px; padding-left: 3px; }
.props { flex: 1; display: grid; grid-template-columns: 18px 179px; grid-auto-rows: 24px; align-items: center; gap: 0 2px; }
.wheel { width: 16px; height: 16px; margin-left: 1px; border-radius: 50%; background: conic-gradient(#f0b040, #e8724a 60deg, #dd5a6a 100deg, #a25fb5 150deg, #4a8fdc 190deg, #35b0a8 240deg, #5cbb5c 290deg, #c8c84a 330deg, #f0b040); }
.swatch { width: 16px; height: 16px; margin: 0 9px 0 12px; background: #fff; }
.line { width: 64px; height: 1px; margin: 0 1px 0 3px; background: #eceef3; }
.ib { display: flex; align-items: center; justify-content: center; width: 24px; height: 24px; }
.ib svg { width: 18px; height: 18px; }
.ib.on { height: 23px; background: #2d5575; border: 1px solid #6aaee0; }

/* workspace */
.work { flex: 1; min-height: 0; display: grid; grid-template-columns: 138px 1fr; }
.side { display: flex; flex-direction: column; border-right: 2px solid #3c414f; background: #3c4151; padding-bottom: 3px; overflow: hidden; }
.side-head { flex: none; height: 30px; padding: 3px 0; border-top: 1px solid #262c3a; background: #2e3344; overflow: hidden; }
.side-head span { margin-left: -10px; white-space: nowrap; }
.side-body { flex: 1; display: flex; flex-direction: column; background: #f1eff0; }
.side-body div { border-bottom: 1px solid #8d8d8f; }
.side-body .s5 { border: 0; }
.s1 { flex: 291; }
.s2 { flex: 96; }
.s3 { flex: 114; }
.s4 { flex: 41; }
.s5 { flex: 76; }

.canvas { position: relative; background: #000; overflow: hidden; }
.drawing { position: absolute; inset: 0; }
.cross { stroke: #f2f2f2; stroke-width: 1; }
.axis { fill: #e4e4e4; font: 300 18px "Open Sans", sans-serif; }
.vplabel { position: absolute; left: 3px; top: 6px; font-size: 12px; }
.cube { position: absolute; right: 0; top: 20px; width: 60px; height: 170px; }
.west { position: absolute; left: 7px; top: 53px; font-size: 18px; line-height: 20px; color: #b0b0b0; }
.wcs { position: absolute; left: 48px; top: 150px; color: #55555c; white-space: nowrap; }
.dyn { position: absolute; left: 846px; top: 422px; display: flex; align-items: flex-start; gap: 5px; color: #111; }
.dyn label { width: 158px; height: 23px; padding: 2px 3px 0; display: flex; align-items: flex-start; justify-content: space-between; background: #9c9a9d; }
.dyn label svg { margin-top: 6px; }
.dist { width: 41px; height: 20px; padding: 2px 3px; background: #fff; }
.dist input { width: 28px; height: 16px; padding: 0; border: 0; background: #1272c8; color: #fff; display: block; }
.ang { width: 52px; height: 20px; padding: 2px 4px; background: #9c9a9d; font-size: 13px; white-space: nowrap; }

.cmd { position: absolute; left: 338px; bottom: 0; width: 1009px; display: flex; flex-direction: column; align-items: flex-start; gap: 4px; font-size: 13px; }
.mono { font-family: "DejaVu Sans Mono", monospace; font-size: 11px; white-space: pre; }
.hist { height: 16px; margin-left: 61px; padding: 0 2px; border-radius: 2px; background: #4c4c4c; color: #e2e2e2; line-height: 16px; white-space: nowrap; }
.hist.dim { color: #ababab; }
.cmdline { align-self: stretch; height: 26px; margin-top: -1px; display: flex; background: #fff; }
.grip { width: 55px; padding-left: 3px; display: flex; align-items: center; gap: 4px; background: #2d323f; }
.wrench { margin-left: 6px; }
.prompt { flex: 1; display: flex; align-items: center; padding: 1px 4px 0; background: #fff; color: #111; white-space: nowrap; }
.prompt .dn { margin: 0 6px 0 3px; }
.ptext { margin-left: 6px; }
.opt { display: inline-block; line-height: 20px; padding: 0 1px; border-radius: 3px; background: #d2d2d4; }
.opt .mono { font-size: 12px; }
.opt em { font-style: normal; color: #2a2ad0; }
.up { margin-left: auto; }

/* status bar */
.status { flex: none; height: 30px; display: flex; gap: 2px; padding: 3px 0; background: #222733; overflow: hidden; }
.layouts { flex: none; width: 470px; display: flex; align-items: flex-start; gap: 5px; }
.layouts a { padding: 0 9px; height: 19px; border-radius: 0 0 4px 4px; background: #2b303d; color: #c6c9d2; }
.layouts a:first-child { margin-left: -34px; }
.cell { flex: none; display: flex; align-items: center; height: 24px; background: #3d4155; white-space: nowrap; }
.scale { width: 69px; justify-content: space-between; padding-right: 4px; }
.coords { width: 140px; justify-content: flex-end; padding-right: 5px; }
.model { width: 28px; justify-content: center; font-weight: 600; }
.s { width: 24px; height: 24px; display: flex; align-items: center; justify-content: center; }
.s svg { width: 18px; height: 18px; }
.s.on { background: #6389bd; background-clip: content-box; padding: 1px; }
.sep { box-shadow: -1px 0 #262c3a; margin-left: 1px; }
.a { width: 16px; display: flex; justify-content: center; }
.pct { width: 57px; padding-left: 2px; }
.units { width: 56px; padding-left: 5px; font-weight: 600; }

/* taskbar */
.taskbar { flex: none; height: 40px; display: flex; justify-content: space-between; background: linear-gradient(90deg, #5cb1ee 0, #64b8ea 12%, #50acf9 20%, #4ba8f2 70%, #64bbf2 85%, #62b9f0 100%); }
.apps { display: flex; margin-left: 713px; gap: 1px; }
.app { width: 48px; height: 40px; padding: 7px 0 0; display: flex; flex-direction: column; align-items: center; justify-content: space-between; }
.app svg { width: 24px; height: 24px; }
.run::after { content: ""; width: 20px; height: 3px; background: #8fd0ff; }
.cur { background: #2b8cdb; border-radius: 4px 4px 0 0; }
.cur::after { width: 40px; background: #a8dcff; }
.c, .acad { width: 24px; height: 24px; border-radius: 2px; color: #fff; font: 700 20px/24px "Open Sans", sans-serif; text-align: center; }
.green { background: #5aa82c; }
.red { background: #e0573f; }
.acad { background: #f7eef0; color: #c02430; font-size: 22px; }
.tray { display: flex; align-items: center; gap: 6px; }
.tray svg { width: 18px; height: 18px; }
.tray b { width: 18px; font-size: 14px; text-align: center; color: #fff; text-shadow: 0 0 1px #000, 0 0 1px #000; }
.tray b + svg { margin-left: 4px; }
.clock { width: 22px; display: flex; flex-direction: column; align-items: flex-end; line-height: 20px; color: #14263c; }

/* floating road dialog */
.dialog { position: absolute; left: -20px; top: 0; width: 245px; z-index: 3; margin: 0; color: #000; background: #f2f0f3; box-shadow: 1px 1px 1px #222; font-size: 12px; }
.dlg-title { height: 16px; display: flex; justify-content: flex-end; align-items: center; background: radial-gradient(#787878 1px, transparent 1px) 0 0 / 3px 3px #454545; }
.dlg-title button { width: 17px; height: 15px; padding-left: 4px; background: #454545; }
.dlg-tabs { height: 17px; padding-left: 20px; display: flex; background: linear-gradient(#989898, #828282); }
.dlg-tabs span { width: 20px; line-height: 16px; background: #dcdcdc; overflow: hidden; display: flex; justify-content: flex-end; padding-right: 6px; }
.dlg-body { display: flex; gap: 6px; height: 92px; padding: 12px 9px 10px 24px; align-items: flex-end; }
.grp { border: 1px solid #dedce2; display: flex; flex-direction: column; }
.dialog label { display: flex; align-items: center; gap: 3px; white-space: nowrap; }
.dialog input { margin: 0; flex: none; }
.dialog input[type="radio"], .dialog input[type="checkbox"] { appearance: none; width: 13px; height: 13px; background: #f8f8fa; border: 1px solid #8f8f95; }
.dialog input[type="radio"] { border-radius: 50%; }
.dialog input[type="radio"]:checked { border: 4px solid #1264ad; background: #fff; }
.dialog input[type="checkbox"] { border-radius: 2px; background: #1264ad; border: 0; position: relative; }
.dialog input[type="checkbox"]::after { content: ""; position: absolute; left: 4px; top: 1px; width: 5px; height: 8px; border: solid #fff; border-width: 0 2px 2px 0; transform: rotate(45deg); }
.cap { background: #f2f0f3; align-self: flex-start; }
.g1 { width: 129px; height: 65px; gap: 7px; padding-left: 4px; }
.g1 .cap { margin: -9px 0 0 3px; padding-right: 4px; }
.pair { display: flex; gap: 11px; }
.pair2 { display: flex; align-items: center; gap: 10px; }
.pair2 input { width: 56px; height: 19px; padding: 0 2px 3px; border: 1px solid #fff; border-bottom-color: #999; background: #fff; }
.g2 { width: 77px; height: 70px; padding-left: 8px; gap: 3px; }
.g2 .cap { margin: -9px 0 0; }
```
